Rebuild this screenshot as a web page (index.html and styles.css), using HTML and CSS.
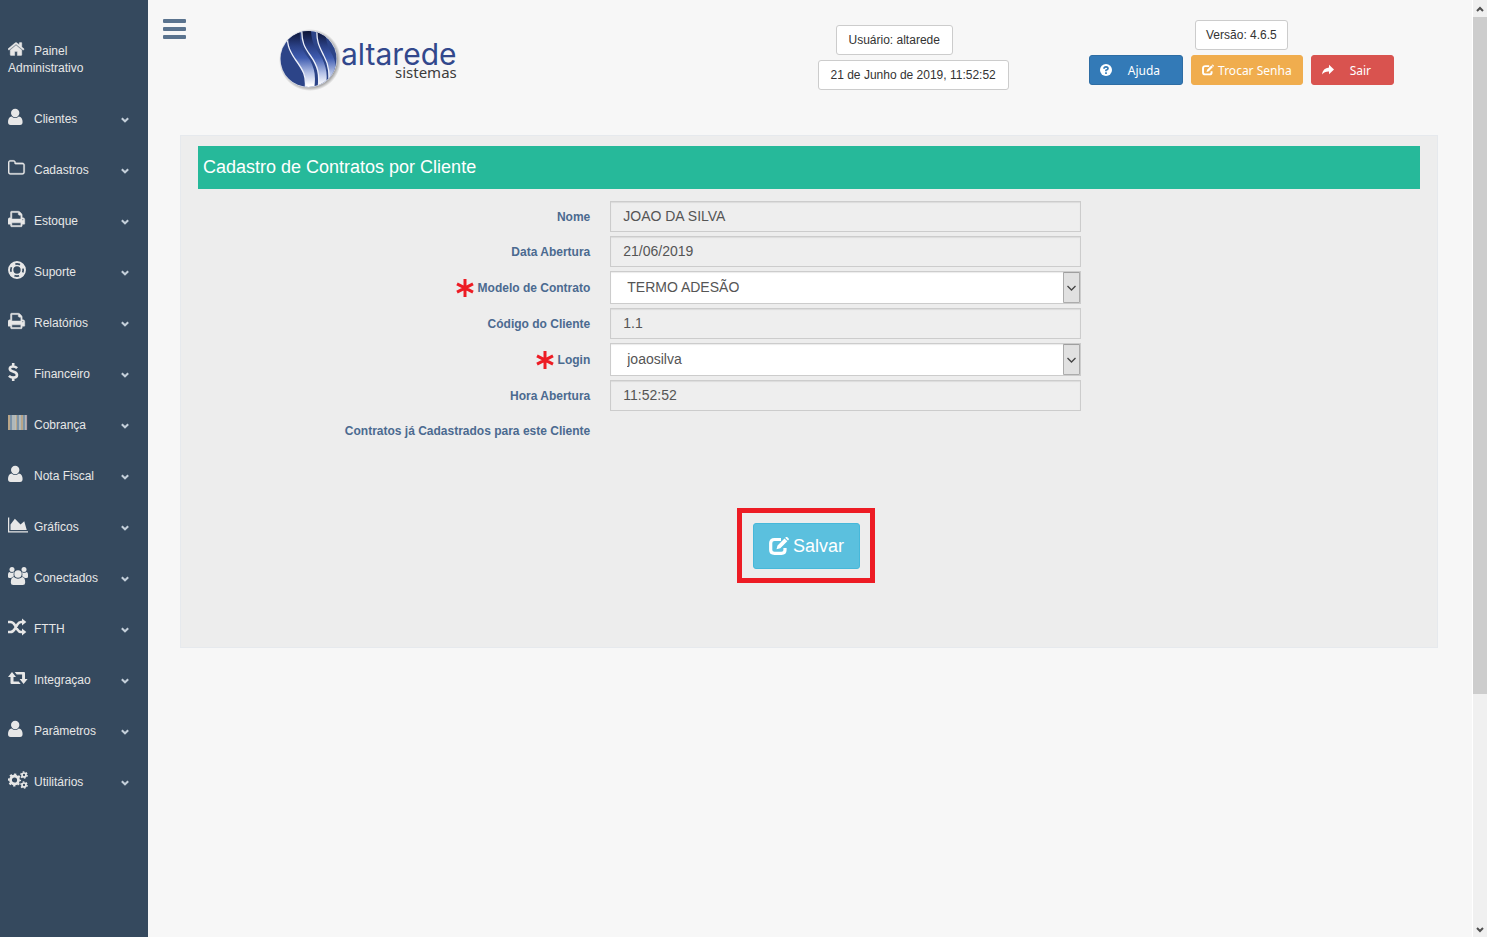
FILE: index.html
```
<!DOCTYPE html>
<html lang="pt-BR">

<head>
    <meta charset="UTF-8">
    <title>Altarede Sistemas</title>
    <link rel="stylesheet" href="styles.css">
</head>

<body>
    <svg class="sprite" aria-hidden="true">
        <symbol id="home" viewBox="97 0 1792 1792" preserveAspectRatio="xMinYMid">
            <path d="M1472 992v480q0 26-19 45t-45 19h-384v-384h-256v384h-384q-26 0-45-19t-19-45v-480q0-1 .5-3t.5-3l575-474 575 474q1 2 1 6zm223-69l-62 74q-8 9-21 11h-3q-13 0-21-7l-692-577-692 577q-12 8-24 7-13-2-21-11l-62-74q-8-10-7-23.5t11-21.5l719-599q32-26 76-26t76 26l244 204v-195q0-14 9-23t23-9h192q14 0 23 9t9 23v408l219 182q10 8 11 21.5t-7 23.5z" stroke="currentColor" stroke-width="40" />
        </symbol>
        <symbol id="user" viewBox="0 0 20 18">
            <path d="M3.600 8.400q3.600 3 7.200 0Q14.600 9 14.600 14q0 3-2.600 3H2.600Q0 17 0 14 0 9 3.600 8.400z" />
            <circle cx="7.200" cy="5" r="4.200" />
        </symbol>
        <symbol id="folder" viewBox="64 0 1792 1792" preserveAspectRatio="xMinYMid">
            <path d="M1600 1312v-704q0-40-28-68t-68-28h-704q-40 0-68-28t-28-68v-64q0-40-28-68t-68-28h-320q-40 0-68 28t-28 68v960q0 40 28 68t68 28h1216q40 0 68-28t28-68zm128-704v704q0 92-66 158t-158 66h-1216q-92 0-158-66t-66-158v-960q0-92 66-158t158-66h320q92 0 158 66t66 158v32h672q92 0 158 66t66 158z" stroke="currentColor" stroke-width="30" />
        </symbol>
        <symbol id="print" viewBox="64 0 1792 1792" preserveAspectRatio="xMinYMid">
            <path d="M448 1536h896v-256h-896v256zm0-640h896v-384h-160q-40 0-68-28t-28-68v-160h-640v640zm1152 64q0-26-19-45t-45-19-45 19-19 45 19 45 45 19 45-19 19-45zm128 0v416q0 13-9.5 22.5t-22.5 9.5h-224v160q0 40-28 68t-68 28h-960q-40 0-68-28t-28-68v-160h-224q-13 0-22.5-9.5t-9.5-22.5v-416q0-79 56.5-135.5t135.5-56.5h64v-544q0-40 28-68t68-28h672q40 0 88 20t76 48l152 152q28 28 48 76t20 88v256h64q79 0 135.5 56.5t56.5 135.5z" stroke="currentColor" stroke-width="50" />
        </symbol>
        <symbol id="ring" viewBox="0 0 20 18">
            <circle cx="9" cy="9" r="8" fill="none" stroke="currentColor" stroke-width="1.900" />
            <circle cx="9" cy="9" r="4.500" fill="none" stroke="currentColor" stroke-width="1.700" />
            <circle cx="9" cy="9" r="6.400" fill="none" stroke="currentColor" stroke-width="4" stroke-dasharray="5 5.05" stroke-dashoffset="-2.500" />
        </symbol>
        <symbol id="dollar" viewBox="0 0 20 18">
            <path d="M9.100 5.100Q7.500 3.500 5 3.500 1.800 3.500 1.800 5.800 1.800 7.700 5 8.500 9 9.500 9 12 9 14.600 5.200 14.600 2.600 14.600.900 12.800M5.200 0v3.300M5.200 14.800v3.200" fill="none" stroke="currentColor" stroke-width="2.600" />
        </symbol>
        <symbol id="barcode" viewBox="0 0 20 18">
            <path d="M0 1h19v15H0z" fill="#9a9a98" />
            <path d="M1 1v15M8 1v15M14 1v15" stroke="#d9b178" />
            <path d="M3 1v15M10 1v15M16 1v15" stroke="#5d8bb8" />
            <path d="M5 1v15M7 1v15M12 1v15M18 1v15" stroke="#c3d6df" />
            <path d="M18.700 1v15" stroke="#b58088" stroke-width=".6" />
        </symbol>
        <symbol id="chart" viewBox="0 0 2048 1792" preserveAspectRatio="xMinYMid">
            <path d="M2048 1536v128h-2048v-1536h128v1408h1920zm-384-1024l256 896h-1664v-576l448-576 576 576z" />
        </symbol>
        <symbol id="users" viewBox="0 0 20 18">
            <circle cx="4" cy="2.500" r="2.500" />
            <circle cx="16" cy="2.500" r="2.500" />
            <path d="M0 9.800V7.500Q0 5 1.500 5q2.500 1.700 4.700 0Q5 7 5.800 9.500q-1.700.2-2.600 1.500H1.500Q0 11 0 9.800zM20 9.800V7.500Q20 5 18.500 5q-2.500 1.700-4.700 0 1.200 2 .4 4.500 1.700.2 2.600 1.500h1.700q1.500 0 1.500-1.200z" />
            <circle cx="10" cy="7" r="3.700" />
            <path d="M5.800 10q4.200 3.500 8.400 0 3 .2 3 5.500 0 2.500-2.400 2.500H5.200q-2.400 0-2.400-2.500 0-5.300 3-5.500z" />
        </symbol>
        <symbol id="random" viewBox="0 0 20 18">
            <path d="M0 4h2.500Q5 4 6.800 7l2.600 4.500Q11 14 13 14h2M0 14h2.500Q5 14 6.800 11l2.600-4.500Q11 4 13 4h2" fill="none" stroke="currentColor" stroke-width="2.500" />
            <path d="M14 .5L18.300 4 14 7.500zM14 10.500l4.300 3.500-4.300 3.500z" />
        </symbol>
        <symbol id="retweet" viewBox="0 0 20 18">
            <path d="M0 8l4-5 4 5H5.500v4.500h5.200l2 2.500H3.500q-1 0-1-1V8zM6.700 3h9.300q1 0 1 1v6h2.600l-4 5-4-5h2.500V5.500H8.700z" />
        </symbol>
        <symbol id="cogs" viewBox="0 0 20 18">
            <g fill="none" stroke="currentColor">
                <circle cx="6.500" cy="9" r="4" stroke-width="2.800" />
                <circle cx="6.500" cy="9" r="5.700" stroke-width="1.800" stroke-dasharray="2.240 2.240" stroke-dashoffset="1.120" />
                <circle cx="16" cy="4" r="2" stroke-width="1.700" />
                <circle cx="16" cy="4" r="3.100" stroke-width="1.400" stroke-dasharray="1.620 1.620" />
                <circle cx="16" cy="14" r="2" stroke-width="1.700" />
                <circle cx="16" cy="14" r="3.100" stroke-width="1.400" stroke-dasharray="1.620 1.620" />
            </g>
        </symbol>
        <symbol id="chevron" viewBox="0 0 8 6">
            <path d="M.8 1.200L4 4.300 7.200 1.200" fill="none" stroke="currentColor" stroke-width="2" />
        </symbol>
        <symbol id="edit" viewBox="0 0 20 18">
            <path d="M12 2.500H5.500Q1.700 2.500 1.700 6v7q0 3.300 3.800 3.300h7q3.500 0 3.500-3.300v-2" fill="none" stroke="currentColor" stroke-width="3.200" />
            <path d="M7.500 12.200l1-3.700 7-7 2.800 2.700-7 7zM16.200.8l.8-.7q.7-.4 1.400.2l1.200 1.200q.6.700 0 1.400l-.7.700z" />
        </symbol>
        <symbol id="question" viewBox="0 0 12 12">
            <circle cx="6" cy="6" r="6" />
            <path d="M4 4.700Q4 2.900 6 2.900t2 1.700Q8 5.700 6 6.300v1M6 8.200v1.700" fill="none" stroke="#337ab7" stroke-width="1.700" />
        </symbol>
        <symbol id="share" viewBox="0 0 12 12">
            <path d="M7 .8l5 4.700-5 4.700V7.600Q2.500 7.400 0 10.500 .8 4 7 3.400z" />
        </symbol>
        <symbol id="asterisk" viewBox="0 0 18 18">
            <path d="M9 0v18M1 4.800l16 8.400M17 4.800L1 13.200" stroke="#ed1c24" stroke-width="3" />
        </symbol>
    </svg>

    <nav class="sidebar">
        <ul class="menu">
            <li><a href="#"><span><svg class="icon"><use href="#home" /></svg>Painel Administrativo</span></a></li>
            <li><a href="#"><span><svg class="icon"><use href="#user" /></svg>Clientes</span><svg class="chevron"><use href="#chevron" /></svg></a></li>
            <li><a href="#"><span><svg class="icon"><use href="#folder" /></svg>Cadastros</span><svg class="chevron"><use href="#chevron" /></svg></a></li>
            <li><a href="#"><span><svg class="icon"><use href="#print" /></svg>Estoque</span><svg class="chevron"><use href="#chevron" /></svg></a></li>
            <li><a href="#"><span><svg class="icon"><use href="#ring" /></svg>Suporte</span><svg class="chevron"><use href="#chevron" /></svg></a></li>
            <li><a href="#"><span><svg class="icon"><use href="#print" /></svg>Relatórios</span><svg class="chevron"><use href="#chevron" /></svg></a></li>
            <li><a href="#"><span><svg class="icon"><use href="#dollar" /></svg>Financeiro</span><svg class="chevron"><use href="#chevron" /></svg></a></li>
            <li><a href="#"><span><svg class="icon"><use href="#barcode" /></svg>Cobrança</span><svg class="chevron"><use href="#chevron" /></svg></a></li>
            <li><a href="#"><span><svg class="icon"><use href="#user" /></svg>Nota Fiscal</span><svg class="chevron"><use href="#chevron" /></svg></a></li>
            <li><a href="#"><span><svg class="icon"><use href="#chart" /></svg>Gráficos</span><svg class="chevron"><use href="#chevron" /></svg></a></li>
            <li><a href="#"><span><svg class="icon"><use href="#users" /></svg>Conectados</span><svg class="chevron"><use href="#chevron" /></svg></a></li>
            <li><a href="#"><span><svg class="icon"><use href="#random" /></svg>FTTH</span><svg class="chevron"><use href="#chevron" /></svg></a></li>
            <li><a href="#"><span><svg class="icon"><use href="#retweet" /></svg>Integraçao</span><svg class="chevron"><use href="#chevron" /></svg></a></li>
            <li><a href="#"><span><svg class="icon"><use href="#user" /></svg>Parâmetros</span><svg class="chevron"><use href="#chevron" /></svg></a></li>
            <li><a href="#"><span><svg class="icon"><use href="#cogs" /></svg>Utilitários</span><svg class="chevron"><use href="#chevron" /></svg></a></li>
        </ul>
    </nav>

    <main class="main">
        <header class="topbar">
            <button type="button" class="toggle" aria-label="Menu"><i></i><i></i><i></i></button>
            <div class="brand">
                <svg class="logo" viewBox="0 0 180 66" role="img" aria-label="altarede sistemas">
                    <defs>
                        <linearGradient id="wave" x1="0" y1="0" x2="0" y2="60" gradientUnits="userSpaceOnUse">
                            <stop offset=".05" stop-color="#0d1434" />
                            <stop offset=".3" stop-color="#2a4085" />
                            <stop offset=".5" stop-color="#3f5cb0" />
                            <stop offset=".75" stop-color="#b4c1e6" />
                            <stop offset=".95" stop-color="#fff" />
                        </linearGradient>
                        <radialGradient id="shade">
                            <stop offset=".86" stop-color="#9a9a9a" />
                            <stop offset="1" stop-color="#f7f7f7" />
                        </radialGradient>
                        <clipPath id="globe">
                            <circle cx="29.500" cy="31" r="28" />
                        </clipPath>
                    </defs>
                    <circle cx="31" cy="32" r="31" fill="url(#shade)" />
                    <circle cx="29.500" cy="31" r="28.500" fill="#dfe3ee" />
                    <g clip-path="url(#globe)">
                        <path d="M0 0h62v62H0z" fill="#2c4488" />
                        <g fill="url(#wave)">
                            <path d="M9 0C7 16 10 22 16 31 24 42 28 48 26 62h9C37 48 36 42 31 32 23 22 20 18 21 0z" />
                            <path d="M23 0c-1 14 3 20 8 27 8 11 10 19 8 35h7c3-14 2-21-3-32-7-11-11-15-11-30z" />
                            <path d="M38 0c-1 14 3 20 7 28 5 9 6 18 4 34h5c5-16 4-24 0-34-5-9-7-13-8-28z" />
                        </g>
                        <g fill="none" stroke="#eef1fa" stroke-width="1.300">
                            <path d="M9 0C7 16 10 22 16 31 24 42 28 48 26 62" />
                            <path d="M23 0c-1 14 3 20 8 27 8 11 10 19 8 35" />
                            <path d="M38 0c-1 14 3 20 7 28 5 9 6 18 4 34" />
                        </g>
                    </g>
                    <text class="logo-name" x="62" y="37">altarede</text>
                    <text class="logo-sub" x="116" y="50">sistemas</text>
                </svg>
            </div>
            <div class="session">
                <button type="button" class="btn btn-default session-user">Usuário: altarede</button>
                <button type="button" class="btn btn-default">21 de Junho de 2019, 11:52:52</button>
            </div>
            <div class="account">
                <button type="button" class="btn btn-default">Versão: 4.6.5</button>
                <div class="account-actions">
                    <button type="button" class="btn btn-primary spaced"><svg class="glyph"><use href="#question" /></svg>Ajuda</button>
                    <button type="button" class="btn btn-warning"><svg class="glyph"><use href="#edit" /></svg>Trocar Senha</button>
                    <button type="button" class="btn btn-danger spaced"><svg class="glyph"><use href="#share" /></svg>Sair</button>
                </div>
            </div>
        </header>

        <section class="panel">
            <h1 class="panel-title">Cadastro de Contratos por Cliente</h1>
            <form class="contract" onsubmit="return false;">
                <div class="row">
                    <label for="nome">Nome</label>
                    <input type="text" id="nome" class="field" value="JOAO DA SILVA" readonly>
                </div>
                <div class="row">
                    <label for="dataAbertura">Data Abertura</label>
                    <input type="text" id="dataAbertura" class="field" value="21/06/2019" readonly>
                </div>
                <div class="row">
                    <label for="modelo"><svg class="required"><use href="#asterisk" /></svg>Modelo de Contrato</label>
                    <select id="modelo" class="field">
                        <option>TERMO ADESÃO</option>
                    </select>
                </div>
                <div class="row">
                    <label for="codigo">Código do Cliente</label>
                    <input type="text" id="codigo" class="field" value="1.1" readonly>
                </div>
                <div class="row">
                    <label for="login"><svg class="required"><use href="#asterisk" /></svg>Login</label>
                    <select id="login" class="field">
                        <option>joaosilva</option>
                    </select>
                </div>
                <div class="row">
                    <label for="horaAbertura">Hora Abertura</label>
                    <input type="text" id="horaAbertura" class="field" value="11:52:52" readonly>
                </div>
                <div class="row">
                    <span class="row-name">Contratos já Cadastrados para este Cliente</span>
                </div>
                <div class="actions">
                    <div class="highlight">
                        <button type="submit" class="save"><svg class="save-icon"><use href="#edit" /></svg>Salvar</button>
                    </div>
                </div>
            </form>
        </section>
    </main>

    <div class="scrollbar" aria-hidden="true">
        <svg class="scroll-arrow" viewBox="0 0 14 17"><path d="M4 11l3-3 3 3" /></svg>
        <div class="scroll-track">
            <div class="scroll-thumb"></div>
        </div>
        <svg class="scroll-arrow" viewBox="0 0 14 17"><path d="M4 8l3 3 3-3" /></svg>
    </div>
</body>

</html>
```
FILE: styles.css
```
* {
    box-sizing: border-box;
}

body {
    margin: 0;
    min-height: 100vh;
    display: flex;
    background: #f7f7f7;
    color: #333;
    font-family: "Liberation Sans", Arial, sans-serif;
    font-size: 12px;
}

svg {
    fill: currentColor;
}

.sprite {
    position: absolute;
    width: 0;
    height: 0;
}

/* sidebar */
.sidebar {
    flex: 0 0 148px;
    background: #35495e;
}

.menu {
    margin: 0;
    padding: 26px 0 0;
    list-style: none;
}

.menu a {
    display: flex;
    justify-content: space-between;
    align-items: center;
    padding: 17px 19px 17px 8px;
    color: #e7e7e7;
    line-height: 17px;
    text-decoration: none;
}

.icon {
    width: 20px;
    height: 18px;
    margin: -3px 6px 0 0;
    vertical-align: -3px;
}

.chevron {
    width: 8px;
    height: 6px;
    color: #c4cfda;
}

/* header */
.main {
    flex: 1;
    min-width: 0;
    padding: 0 34px 0 32px;
}

.topbar {
    display: flex;
    align-items: flex-start;
    height: 135px;
    margin: 0 -34px 0 -32px;
    padding: 0 78px 0 15px;
}

.toggle {
    display: flex;
    flex-direction: column;
    gap: 4px;
    width: 23px;
    margin: 19px 93px 0 0;
    padding: 0;
    border: 0;
    background: none;
}

.toggle i {
    width: 23px;
    height: 4px;
    border-radius: 1px;
    background: #5a738e;
}

.brand {
    flex: 1;
    padding-top: 28px;
}

.logo {
    display: block;
    width: 180px;
    height: 66px;
}

.logo-name {
    fill: #32488c;
    font-family: Inter, sans-serif;
    font-size: 30px;
}

.logo-sub {
    fill: #3c3c3c;
    font-family: "Noto Sans", sans-serif;
    font-size: 15px;
}

.session,
.account {
    display: flex;
    flex-direction: column;
    gap: 5px;
}

.session {
    align-items: flex-start;
    margin-right: 80px;
    padding-top: 25px;
}

.session .btn {
    padding: 0 12px;
}

.session .session-user {
    margin-left: 18px;
}

.account {
    align-items: center;
    padding-top: 20px;
}

.account-actions {
    display: flex;
    gap: 8px;
}

.btn {
    display: flex;
    align-items: center;
    gap: 4px;
    height: 30px;
    padding: 0 10px;
    border: 1px solid;
    border-radius: 3px;
    color: #fff;
    font-family: "Noto Sans", sans-serif;
    font-size: 12px;
    white-space: nowrap;
}

.btn-default {
    background: #fff;
    border-color: #ccc;
    color: #333;
    font-family: "Liberation Sans", Arial, sans-serif;
}

.btn-primary {
    background: #337ab7;
    border-color: #2e6da4;
}

.btn-warning {
    background: #f0ad4e;
    border-color: #f0ad4e;
}

.btn-danger {
    background: #d9534f;
    border-color: #d9534f;
}

.spaced {
    gap: 16px;
    padding-right: 22px;
}

.glyph {
    width: 12px;
    height: 12px;
}

/* form panel */
.panel {
    padding: 10px 17px 64px;
    background: #ededed;
    border: 1px solid #e6e9ed;
}

.panel-title {
    margin: 0;
    padding: 0 5px;
    background: #26b99a;
    color: #fff;
    font-size: 18px;
    font-weight: 400;
    line-height: 43px;
}

.contract {
    display: flex;
    flex-direction: column;
    gap: 4px;
    padding-top: 12px;
}

.row {
    display: grid;
    grid-template-columns: 32.1% 38.5%;
    gap: 20px;
    align-items: center;
    min-height: 31px;
}

.row label,
.row-name {
    display: flex;
    justify-content: flex-end;
    align-items: center;
    gap: 4px;
    color: #4b6a90;
    font-weight: 700;
}

.required {
    width: 18px;
    height: 18px;
}

.field {
    width: 100%;
    height: 31px;
    padding: 0 12px 2px;
    border: 1px solid #ccc;
    border-radius: 0;
    background: #eee;
    box-shadow: inset 0 1px 1px rgba(0, 0, 0, 0.08);
    color: #555;
    font-family: "Liberation Sans", Arial, sans-serif;
    font-size: 14px;
}

select.field {
    height: 33px;
    padding: 0 16px 2px;
    appearance: none;
    background: #fff url("data:image/svg+xml,%3Csvg xmlns='http://www.w3.org/2000/svg' width='17' height='31'%3E%3Cpath d='M.5.5h16v30H.5z' fill='%23e1e1e1' stroke='%23acacac'/%3E%3Cpath d='M4.500 14l4 4 4-4' fill='none' stroke='%23444' stroke-width='1.300'/%3E%3C/svg%3E") no-repeat right center;
}

.actions {
    display: flex;
    justify-content: center;
    padding: 58px 6px 0 0;
}

.highlight {
    padding: 10px 10px 9px 11px;
    border: 5px solid #ed1c24;
}

.save {
    display: flex;
    align-items: center;
    gap: 4px;
    height: 46px;
    padding: 0 15px;
    border: 1px solid #46b8da;
    border-radius: 3px;
    background: #5bc0de;
    color: #fff;
    font-family: "Liberation Sans", Arial, sans-serif;
    font-size: 18px;
}

.save-icon {
    width: 20px;
    height: 18px;
}

/* scrollbar */
.scrollbar {
    display: flex;
    flex-direction: column;
    flex: 0 0 15px;
    border-left: 1px solid #fff;
    background: #f0f0f0;
}

.scroll-arrow {
    width: 14px;
    height: 17px;
    fill: none;
    stroke: #505050;
    stroke-width: 2;
}

.scroll-track {
    flex: 1;
    display: flex;
}

.scroll-thumb {
    width: 100%;
    height: 75%;
    background: #cdcdcd;
}
```
